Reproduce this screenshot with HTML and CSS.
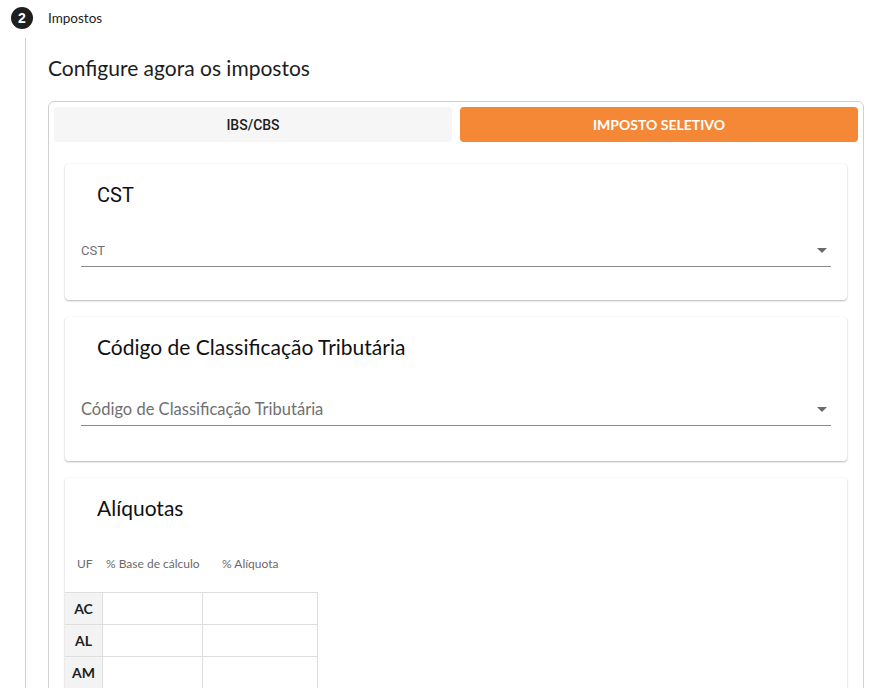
FILE: index.html
```html
<!DOCTYPE html>
<html lang="pt-BR">
<head>
<meta charset="utf-8">
<link rel="stylesheet" href="styles.css">
</head>
<body>
<div class="step">
  <div class="step-head">
    <span class="step-num">2</span>
    <span class="step-label">Impostos</span>
  </div>
  <div class="step-body">
    <h2 class="page-title">Configure agora os impostos</h2>
    <div class="outer">
      <div class="tabs">
        <div class="tab">IBS/CBS</div>
        <div class="tab active">IMPOSTO SELETIVO</div>
      </div>
      <div class="cards">
        <section class="card card-cst">
          <h3 class="card-title roboto">CST</h3>
          <div class="select small">
            <span class="select-text">CST</span>
            <span class="arrow"></span>
          </div>
        </section>
        <section class="card card-cct">
          <h3 class="card-title">Código de Classificação Tributária</h3>
          <div class="select">
            <span class="select-text">Código de Classificação Tributária</span>
            <span class="arrow"></span>
          </div>
        </section>
        <section class="card card-aliq">
          <h3 class="card-title">Alíquotas</h3>
          <div class="table-head">
            <span class="th th-uf">UF</span>
            <span class="th th-base">% Base de cálculo</span>
            <span class="th th-aliq">% Alíquota</span>
          </div>
          <div class="grid">
            <div class="uf">AC</div><div class="cell"></div><div class="cell"></div>
            <div class="uf">AL</div><div class="cell"></div><div class="cell"></div>
            <div class="uf">AM</div><div class="cell"></div><div class="cell"></div>
          </div>
        </section>
      </div>
    </div>
  </div>
</div>
</body>
</html>
```

FILE: styles.css
```css
html, body {
  margin: 0;
  padding: 0;
  background: #ffffff;
  height: 688px;
  overflow: hidden;
}
body {
  font-family: Lato, "Open Sans", sans-serif;
  color: #1d1d1d;
}
.step {
  padding: 7px 0 0 11px;
}
.step-head {
  display: flex;
  align-items: center;
  gap: 15px;
  height: 22px;
}
.step-num {
  width: 22px;
  height: 22px;
  border-radius: 50%;
  background: #1f1f1f;
  color: #fff;
  font-family: "Liberation Sans", Arial, sans-serif;
  font-weight: 700;
  font-size: 14px;
  display: flex;
  align-items: center;
  justify-content: center;
  flex: none;
}
.step-label {
  font-size: 13.5px;
  color: #1d1d1d;
}
.step-body {
  margin: 9px 0 0 14px;
  border-left: 1px solid #cfcfcf;
  padding: 0 17px 0 22px;
  height: 700px;
}
.page-title {
  margin: 0;
  padding-top: 18px;
  font-size: 21px;
  font-weight: 400;
  line-height: 24px;
  color: #1d1d1d;
}
.outer {
  margin-top: 21px;
  border: 1px solid #d0d0d0;
  border-radius: 6px;
  padding: 5px 5px 0 5px;
  height: 700px;
}
.tabs {
  display: grid;
  grid-template-columns: 1fr 1fr;
  gap: 8px;
}
.tab {
  height: 35px;
  border-radius: 4px;
  background: #f6f6f6;
  display: flex;
  align-items: center;
  justify-content: center;
  font-family: Roboto, "Liberation Sans", sans-serif;
  font-weight: 500;
  font-size: 14px;
  color: #1d1d1d;
}
.tab.active {
  background: #f58836;
  color: #fff;
  font-family: Lato, sans-serif;
  font-weight: 700;
  font-size: 14px;
}
.cards {
  padding: 22px 11px 0 11px;
  display: flex;
  flex-direction: column;
  gap: 17px;
}
.card {
  background: #fff;
  border-radius: 4px;
  box-shadow: 0 1px 2px rgba(0,0,0,0.28), 0 0 2px rgba(0,0,0,0.06);
  padding: 19px 16px 0 16px;
}
.card-title {
  margin: 0 0 0 16px;
  font-size: 21px;
  font-weight: 400;
  line-height: 24px;
  color: #111;
}
.card-title.roboto {
  font-family: Roboto, "Liberation Sans", sans-serif;
  font-size: 20px;
}
.card-cst { height: 117px; }
.card-cct { height: 126px; padding-top: 18px; }
.card-aliq { height: 260px; padding-left: 0; padding-right: 0; padding-top: 18px; }
.card-aliq .card-title { margin-left: 32px; }
.select {
  margin-top: 34px;
  height: 33px;
  border-bottom: 1px solid #8a8a8a;
  display: flex;
  align-items: center;
  justify-content: space-between;
  padding-right: 4px;
  box-sizing: border-box;
}
.card-cst .select { margin-top: 27px; }
.select-text {
  font-size: 16.5px;
  color: #707070;
}
.select.small .select-text {
  font-family: Roboto, "Liberation Sans", sans-serif;
  font-size: 13px;
}
.arrow {
  width: 0;
  height: 0;
  border-left: 5px solid transparent;
  border-right: 5px solid transparent;
  border-top: 5px solid #6b6b6b;
}
.table-head {
  display: flex;
  align-items: center;
  height: 20px;
  margin-top: 33px;
  padding-left: 12px;
  font-size: 12px;
  color: #6a6a6a;
}
.th-uf { width: 29px; }
.th-base { width: 116px; }
.grid {
  margin-top: 19px;
  display: grid;
  grid-template-columns: 38px 100px 115px;
  grid-auto-rows: 32px;
  width: 253px;
  border-top: 1px solid #dedede;
}
.uf {
  background: #f3f3f3;
  border-right: 1px solid #dedede;
  border-bottom: 1px solid #dedede;
  display: flex;
  align-items: center;
  justify-content: center;
  font-size: 14px;
  font-weight: 700;
  color: #1d1d1d;
}
.cell {
  border-right: 1px solid #dedede;
  border-bottom: 1px solid #dedede;
}
```
